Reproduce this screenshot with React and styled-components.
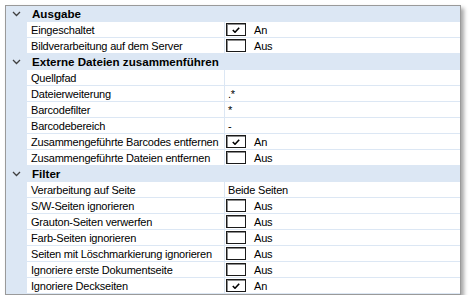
import React from 'react';
import styled, { createGlobalStyle } from 'styled-components';

const GlobalStyle = createGlobalStyle`
  body {
    margin: 0;
    background: #ffffff;
    font-family: "Liberation Sans", Arial, sans-serif;
    font-size: 11px;
    color: #000000;
  }
`;

const Page = styled.div`
  padding: 5px 0 0 5px;
`;

const Panel = styled.div`
  width: 454px;
  border: 1px solid #9a9a9a;
  background: #ffffff;
  box-shadow: 3px 3px 4px rgba(0, 0, 0, 0.35);
`;

const HeaderRow = styled.div`
  display: grid;
  grid-template-columns: 21px 1fr;
  height: 15px;
  border-bottom: 1px solid #dce7f4;
  background: #dce7f4;
  align-items: center;
`;

const Chevron = styled.div`
  display: flex;
  justify-content: center;
  align-items: center;
  height: 100%;
`;

const HeaderTitle = styled.div`
  font-weight: bold;
  font-size: 11.6px;
  padding-left: 5px;
  white-space: nowrap;
`;

const ItemRow = styled.div`
  display: grid;
  grid-template-columns: 21px 198px 1fr;
  height: 16px;
`;

const Gutter = styled.div`
  background: #dce7f4;
`;

const NameCell = styled.div`
  padding-left: 4px;
  border-bottom: 1px solid #dce7f4;
  border-right: 1px solid #dce7f4;
  white-space: nowrap;
  letter-spacing: -0.2px;
  display: flex;
  align-items: center;
`;

const ValueCell = styled.div`
  display: flex;
  align-items: center;
  gap: 8px;
  padding-left: ${(p) => (p.$check ? '1px' : '3px')};
  border-bottom: 1px solid #dce7f4;
  white-space: nowrap;
  letter-spacing: -0.2px;
`;

const Box = styled.div`
  width: 18px;
  height: 11px;
  border: 1px solid #1a1a1a;
  box-shadow: inset 1px 1px 0 #8c8c8c;
  background: #ffffff;
  display: flex;
  align-items: flex-end;
  justify-content: center;
`;

const ChevronIcon = () => (
  <svg width="9" height="6" viewBox="0 0 9 6">
    <path d="M1 1 L4.5 4.5 L8 1" fill="none" stroke="#404040" strokeWidth="1.3" />
  </svg>
);

const CheckIcon = () => (
  <svg width="8" height="6" viewBox="0 0 8 6" style={{ marginBottom: 2 }}>
    <path d="M0.8 3 L3 5.2 L7.2 0.8" fill="none" stroke="#000" strokeWidth="1.6" />
  </svg>
);

const sections = [
  {
    title: 'Ausgabe',
    items: [
      { name: 'Eingeschaltet', check: true },
      { name: 'Bildverarbeitung auf dem Server', check: false },
    ],
  },
  {
    title: 'Externe Dateien zusammenführen',
    items: [
      { name: 'Quellpfad', value: '' },
      { name: 'Dateierweiterung', value: '.*' },
      { name: 'Barcodefilter', value: '*' },
      { name: 'Barcodebereich', value: '-' },
      { name: 'Zusammengeführte Barcodes entfernen', check: true },
      { name: 'Zusammengeführte Dateien entfernen', check: false },
    ],
  },
  {
    title: 'Filter',
    items: [
      { name: 'Verarbeitung auf Seite', value: 'Beide Seiten' },
      { name: 'S/W-Seiten ignorieren', check: false },
      { name: 'Grauton-Seiten verwerfen', check: false },
      { name: 'Farb-Seiten ignorieren', check: false },
      { name: 'Seiten mit Löschmarkierung ignorieren', check: false },
      { name: 'Ignoriere erste Dokumentseite', check: false },
      { name: 'Ignoriere Deckseiten', check: true },
    ],
  },
];

function App() {
  return (
    <>
      <GlobalStyle />
      <Page>
        <Panel>
          {sections.map((section) => (
            <React.Fragment key={section.title}>
              <HeaderRow>
                <Chevron>
                  <ChevronIcon />
                </Chevron>
                <HeaderTitle>{section.title}</HeaderTitle>
              </HeaderRow>
              {section.items.map((item) => {
                const isCheck = typeof item.check === 'boolean';
                return (
                  <ItemRow key={item.name}>
                    <Gutter />
                    <NameCell>{item.name}</NameCell>
                    {isCheck ? (
                      <ValueCell $check>
                        <Box>{item.check && <CheckIcon />}</Box>
                        <span>{item.check ? 'An' : 'Aus'}</span>
                      </ValueCell>
                    ) : (
                      <ValueCell>{item.value}</ValueCell>
                    )}
                  </ItemRow>
                );
              })}
            </React.Fragment>
          ))}
        </Panel>
      </Page>
    </>
  );
}

export default App;
